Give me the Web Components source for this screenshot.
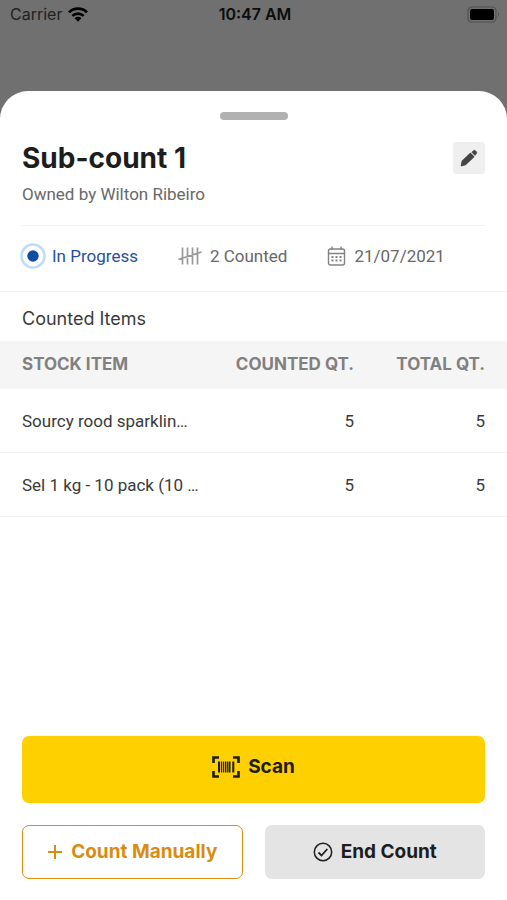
<!DOCTYPE html>
<html lang="en">
<head>
<meta charset="utf-8">
<meta name="viewport" content="width=device-width, initial-scale=1">
<title>Sub-count 1</title>
<style>
:root {
	--font-body: Roboto, "Liberation Sans", sans-serif;
	--font-heading: Inter, "Liberation Sans", sans-serif;
	--colour-text: #1d1d1d;
	--colour-muted: #686868;
	--colour-line: #f1f1f1;
	--colour-brand: #ffd000;
	--colour-accent: #d98c12;
	--gutter: 22px;
}
body {
	margin: 0;
	min-height: 100vh;
	display: flex;
	flex-direction: column;
	background: #707070;
	color: var(--colour-text);
	font: 17px/24px var(--font-body);
}
</style>
</head>
<body>

<status-bar carrier="Carrier" time="10:47 AM"></status-bar>

<bottom-sheet>
	<count-header name="Sub-count 1" owner="Wilton Ribeiro"></count-header>
	<count-facts>
		<count-fact icon="progress" active>In Progress</count-fact>
		<count-fact icon="tally">2 Counted</count-fact>
		<count-fact icon="calendar">21/07/2021</count-fact>
	</count-facts>
	<stock-table heading="Counted Items"></stock-table>
	<action-bar slot="footer">
		<action-button variant="primary" icon="scan">Scan</action-button>
		<action-button variant="outline" icon="plus">Count Manually</action-button>
		<action-button variant="plain" icon="check">End Count</action-button>
	</action-bar>
</bottom-sheet>

<script>
const icons = {
	wifi: `<svg width="20" height="15" viewBox="0 0 20 15"><g fill="none" stroke="currentColor" stroke-width="2.7"><path d="M1 5.4a12.8 12.8 0 0 1 18 0"/><path d="M4.3 8.9a8.1 8.1 0 0 1 11.4 0"/></g><path fill="currentColor" d="M6.6 11.2a4.9 4.9 0 0 1 6.8 0L10 14.7z"/></svg>`,
	battery: `<svg width="33" height="17" viewBox="0 0 33 17"><rect x="1" y="1" width="28" height="15" rx="4" fill="none" stroke="#505050" stroke-width="1.2"/><rect x="3" y="3" width="24" height="11" rx="2"/><path d="M31 6v5q2-2.500 0-5z" fill="#505050"/></svg>`,
	pencil: `<svg width="18" height="18" viewBox="0 0 18 18" fill="#444"><path d="M1.500 16.500l.8-4.200L10.400 4.600l3.200 3.200L5.400 15.600z" stroke="#444" stroke-width="1.400" stroke-linejoin="round"/><path d="M11.800 3.200l1.300-1.300q1.400-1.200 2.700.1l.4.400q1.200 1.300 0 2.600l-1.300 1.400z" stroke="#444" stroke-width=".6"/></svg>`,
	progress: `<svg width="26" height="26" viewBox="0 0 26 26"><circle cx="13" cy="13" r="11.500" fill="#fff" stroke="#bcdcfa" stroke-width="2.500"/><circle cx="13" cy="13" r="5.700" fill="#0b4ea2"/></svg>`,
	tally: `<svg width="24" height="20" viewBox="0 0 24 20" fill="none" stroke="#999" stroke-width="1.700"><path d="M4.500 1.500v17M9.500 1.500v17M14.500 1.500v17M19.500 1.500v17M.5 13.500L23.500 6"/></svg>`,
	calendar: `<svg width="19" height="20" viewBox="0 0 19 20" fill="none" stroke="#828282" stroke-width="1.400"><rect x="1.500" y="3" width="16" height="16" rx="2"/><path d="M1.500 7.500h16M5 .5V4M14 .5V4"/><path stroke-width="2" stroke-dasharray="2 2" d="M4.500 11h10M4.500 14.500h10"/></svg>`,
	scan: `<svg width="28" height="22" viewBox="0 0 28 22" fill="none" stroke="currentColor"><path stroke-width="2.600" d="M1.500 7V1.500h5.500M21 1.500h5.500V7M26.500 15v5.500H21M7 20.500H1.500V15"/><path stroke-width="2" d="M7 5.500v11M17.500 5.500v11M21.300 5.500v11"/><path stroke-width="1.200" d="M9.500 5.500v11M11.500 5.500v11M13.500 5.500v11M15.300 5.500v11"/></svg>`,
	plus: `<svg width="16" height="16" viewBox="0 0 16 16" fill="none" stroke="currentColor" stroke-width="2"><path d="M8 1v14M1 8h14"/></svg>`,
	check: `<svg width="20" height="20" viewBox="0 0 20 20" fill="none" stroke="currentColor"><circle cx="10" cy="10" r="8.700" stroke-width="1.500"/><path stroke-width="1.800" d="M5.500 10.500l3 3L14.300 7"/></svg>`
}

class BaseElement extends HTMLElement {
	constructor() {
		super();
		this.attachShadow({mode: 'open'});
	}

	connectedCallback() {
		this.shadowRoot.innerHTML = this.render();
	}
}

class StatusBar extends BaseElement {
	render() {
		return `
<style>
:host {
	display: grid;
	grid-template-columns: 1fr auto 1fr;
	align-items: center;
	height: 28px;
	padding: 0 7px 0 10px;
	margin-bottom: 63px;
	color: #0c0c0c;
	font: 16px/20px var(--font-heading);
}
.carrier {
	display: flex;
	align-items: center;
	gap: 6px;
	color: #222;
}
.carrier svg { color: #000; }
time { font-weight: 600; }
.battery {
	display: flex;
	justify-content: flex-end;
}
</style>
<div class="carrier"><span>${this.getAttribute('carrier')}</span>${icons.wifi}</div>
<time>${this.getAttribute('time')}</time>
<div class="battery">${icons.battery}</div>`
	}
}

class BottomSheet extends BaseElement {
	render() {
		return `
<style>
:host {
	flex: 1;
	display: flex;
	flex-direction: column;
	background: #fff;
	border-radius: 28px 28px 0 0;
}
.handle {
	width: 68px;
	height: 8px;
	margin: 21px auto;
	border-radius: 4px;
	background: #b1b1b1;
}
footer { margin-top: auto; }
</style>
<div class="handle"></div>
<main><slot></slot></main>
<footer><slot name="footer"></slot></footer>`
	}
}

class CountHeader extends BaseElement {
	render() {
		return `
<style>
:host {
	display: flex;
	justify-content: space-between;
	align-items: flex-start;
	margin: 0 var(--gutter);
	padding: 1px 0 19px;
	border-bottom: 1px solid var(--colour-line);
}
h1 {
	margin: 0;
	font: 700 28px/32px var(--font-heading);
}
p {
	margin: 8px 0 0;
	color: var(--colour-muted);
}
button {
	display: flex;
	align-items: center;
	justify-content: center;
	width: 32px;
	height: 32px;
	padding: 0;
	border: 0;
	border-radius: 3px;
	background: #efefef;
}
</style>
<div>
	<h1>${this.getAttribute('name')}</h1>
	<p>Owned by ${this.getAttribute('owner')}</p>
</div>
<button type="button" aria-label="Edit">${icons.pencil}</button>`
	}
}

class CountFacts extends BaseElement {
	render() {
		return `
<style>
:host {
	display: flex;
	gap: 40px;
	padding: 16px 20px 21px;
	border-bottom: 1px solid var(--colour-line);
}
</style>
<slot></slot>`
	}
}

class CountFact extends BaseElement {
	render() {
		return `
<style>
:host {
	display: flex;
	align-items: center;
	gap: 8px;
	height: 28px;
	color: var(--colour-muted);
	white-space: nowrap;
}
:host([active]) {
	gap: 6px;
	color: #26519b;
}
</style>
${icons[this.getAttribute('icon')]}<span><slot></slot></span>`
	}
}

const stockItems = [
	{name: 'Sourcy rood sparklin…', counted: 5, total: 5},
	{name: 'Sel 1 kg - 10 pack (10 …', counted: 5, total: 5}
]

class StockTable extends BaseElement {
	render() {
		return `
<style>
:host { display: block; }
h2 {
	margin: 0;
	padding: 15px var(--gutter) 10px;
	font: 400 18px/24px var(--font-heading);
	color: #3a3a3a;
}
table {
	width: 100%;
	border-collapse: collapse;
	table-layout: fixed;
}
th, td {
	padding: 0;
	text-align: right;
	white-space: nowrap;
}
th {
	height: 46px;
	padding-bottom: 2px;
	background: #f5f5f5;
	color: #808080;
	font: 700 17px/24px var(--font-heading);
}
td {
	height: 63px;
	border-bottom: 1px solid var(--colour-line);
	color: #3a3a3a;
}
th:first-child, td:first-child {
	padding-left: var(--gutter);
	text-align: left;
}
th:last-child, td:last-child {
	width: 131px;
	padding-right: var(--gutter);
}
th:nth-child(2) { width: 140px; }
</style>
<h2 id="heading">${this.getAttribute('heading')}</h2>
<table aria-labelledby="heading">
	<thead>
		<tr><th scope="col">STOCK ITEM</th><th scope="col">COUNTED QT.</th><th scope="col">TOTAL QT.</th></tr>
	</thead>
	<tbody>
		${stockItems.map(item => `<tr><td>${item.name}</td><td>${item.counted}</td><td>${item.total}</td></tr>`).join('')}
	</tbody>
</table>`
	}
}

class ActionBar extends BaseElement {
	render() {
		return `
<style>
:host {
	display: grid;
	grid-template-columns: 1fr 1fr;
	gap: 22px;
	padding: 22px var(--gutter) 21px;
}
::slotted([variant="primary"]) { grid-column: 1 / -1; }
</style>
<slot></slot>`
	}
}

class ActionButton extends BaseElement {
	render() {
		return `
<style>
:host { display: block; }
button {
	display: flex;
	align-items: center;
	justify-content: center;
	gap: 8px;
	width: 100%;
	height: 54px;
	padding: 0;
	border: 0;
	border-radius: 7px;
	background: #e4e4e4;
	color: var(--colour-text);
	font: 700 19px/24px var(--font-heading);
	white-space: nowrap;
}
:host([variant="primary"]) button {
	height: 67px;
	padding-bottom: 5px;
	background: var(--colour-brand);
}
:host([variant="outline"]) button {
	border: 1px solid var(--colour-accent);
	background: #fff;
	color: var(--colour-accent);
}
</style>
<button type="button">${icons[this.getAttribute('icon')]}<span><slot></slot></span></button>`
	}
}

window.customElements.define('status-bar', StatusBar);
window.customElements.define('bottom-sheet', BottomSheet);
window.customElements.define('count-header', CountHeader);
window.customElements.define('count-facts', CountFacts);
window.customElements.define('count-fact', CountFact);
window.customElements.define('stock-table', StockTable);
window.customElements.define('action-bar', ActionBar);
window.customElements.define('action-button', ActionButton);
</script>
</body>
</html>
